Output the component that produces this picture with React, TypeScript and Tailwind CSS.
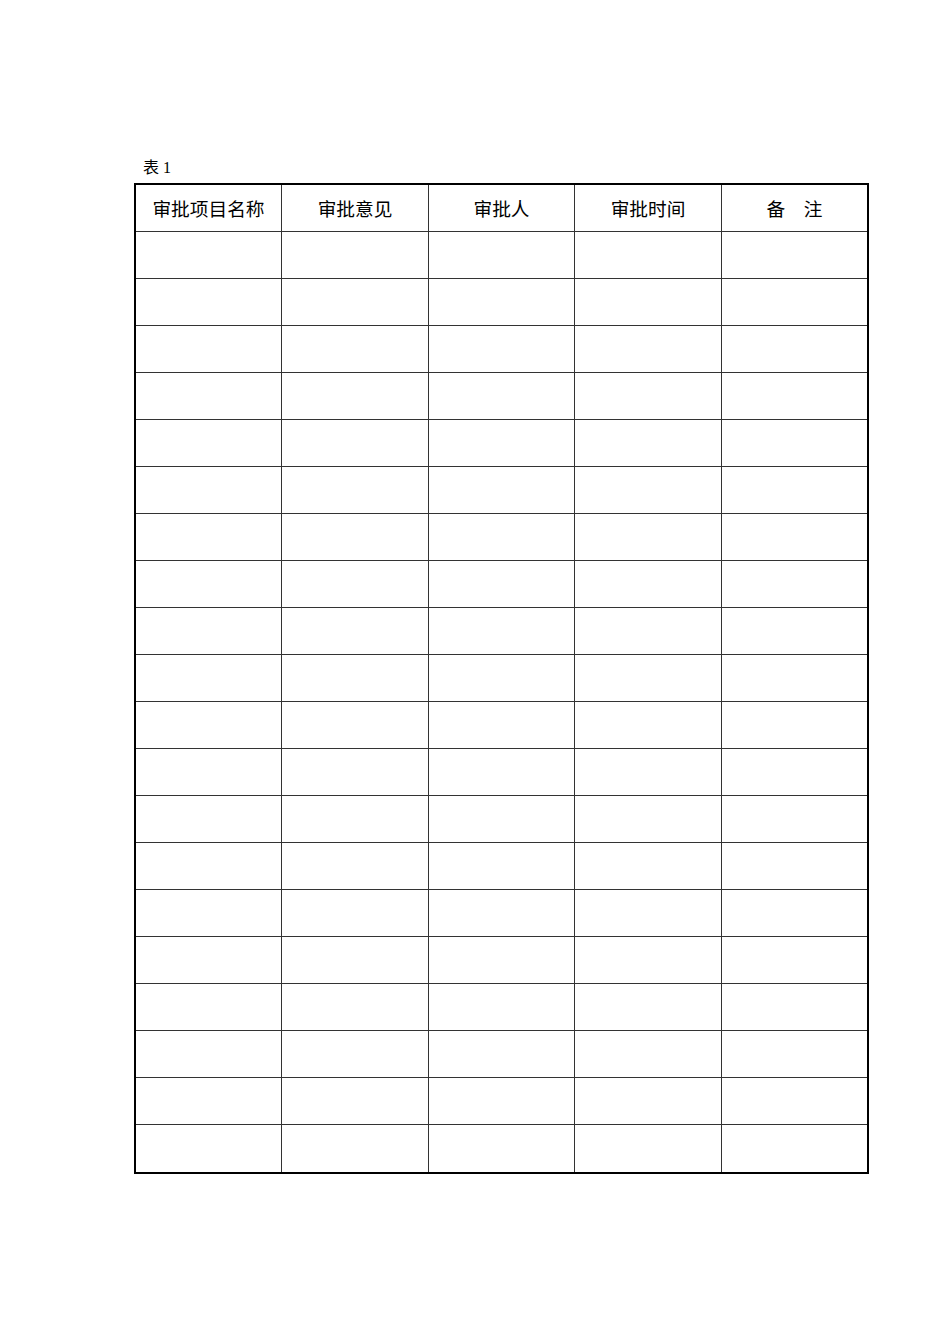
const headers = ["审批项目名称", "审批意见", "审批人", "审批时间", "备　注"];
const rows = Array.from({ length: 20 }, (_, i) => i);

function Row({ children, last }: { children?: React.ReactNode; last?: boolean }) {
  return (
    <div className={`grid grid-cols-[146px_147px_146px_147px_145px] h-[47px] ${last ? "" : "border-b border-[#333]"}`}>
      {children}
    </div>
  );
}

export default function App() {
  return (
    <div className="min-h-[1344px] w-[950px] bg-white pl-[134px] pt-[157px]">
      <div className="pl-[9px] h-[26px] text-[16px] leading-[22px] text-black font-['Liberation_Serif','Noto_Sans_CJK_SC',serif]">
        表 1
      </div>
      <div className="w-[735px] border-2 border-black font-['Noto_Sans_CJK_SC',sans-serif] text-[18.7px] text-black">
        <Row>
          {headers.map((h, i) => (
            <div
              key={h}
              className={`flex items-center justify-center ${i < 4 ? "border-r border-[#333]" : ""}`}
            >
              {h}
            </div>
          ))}
        </Row>
        {rows.map((r) => (
          <Row key={r} last={r === rows.length - 1}>
            {headers.map((h, i) => (
              <div key={h} className={i < 4 ? "border-r border-[#333]" : ""} />
            ))}
          </Row>
        ))}
      </div>
    </div>
  );
}
